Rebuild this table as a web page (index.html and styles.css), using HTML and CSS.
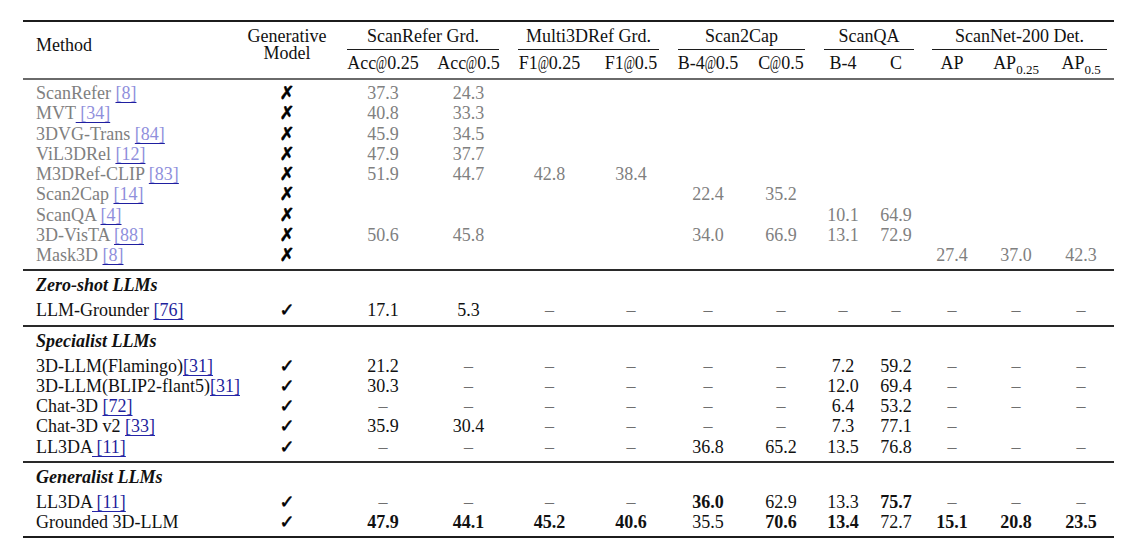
FILE: index.html
```html
<!DOCTYPE html>
<html>
<head>
<meta charset="utf-8">
<link rel="stylesheet" href="styles.css">
</head>
<body>
<div class="wrap">
<table class="results">
  <colgroup>
    <col class="c-method"><col class="c-gen"><col class="c-a1"><col class="c-a2"><col class="c-f1"><col class="c-f2">
    <col class="c-b4"><col class="c-c5"><col class="c-qb"><col class="c-qc"><col class="c-ap"><col class="c-ap25"><col class="c-ap5">
  </colgroup>
  <thead>
    <tr class="h1">
      <th rowspan="2" class="method-h">Method</th>
      <th rowspan="2" class="gen-h"><div class="gl">Generative</div><div class="gl">Model</div></th>
      <th colspan="2" class="grp"><div class="cm cm-sr">ScanRefer Grd.</div></th>
      <th colspan="2" class="grp"><div class="cm cm-mr">Multi3DRef Grd.</div></th>
      <th colspan="2" class="grp"><div class="cm cm-sc">Scan2Cap</div></th>
      <th colspan="2" class="grp"><div class="cm cm-qa">ScanQA</div></th>
      <th colspan="3" class="grp"><div class="cm cm-sn">ScanNet-200 Det.</div></th>
    </tr>
    <tr class="h2">
      <th>Acc<span class="at">@</span>0.25</th>
      <th>Acc<span class="at">@</span>0.5</th>
      <th>F1<span class="at">@</span>0.25</th>
      <th>F1<span class="at">@</span>0.5</th>
      <th>B-4<span class="at">@</span>0.5</th>
      <th>C<span class="at">@</span>0.5</th>
      <th>B-4</th>
      <th>C</th>
      <th>AP</th>
      <th>AP<sub>0.25</sub></th>
      <th>AP<sub>0.5</sub></th>
    </tr>
  </thead>
  <tbody class="grey first">
    <tr><td class="m">ScanRefer <a class="cite">[8]</a></td><td class="x">✗</td><td>37.3</td><td>24.3</td><td></td><td></td><td></td><td></td><td></td><td></td><td></td><td></td><td></td></tr>
    <tr><td class="m">MVT<a class="cite"> [34]</a></td><td class="x">✗</td><td>40.8</td><td>33.3</td><td></td><td></td><td></td><td></td><td></td><td></td><td></td><td></td><td></td></tr>
    <tr><td class="m">3DVG-Trans <a class="cite">[84]</a></td><td class="x">✗</td><td>45.9</td><td>34.5</td><td></td><td></td><td></td><td></td><td></td><td></td><td></td><td></td><td></td></tr>
    <tr><td class="m">ViL3DRel <a class="cite">[12]</a></td><td class="x">✗</td><td>47.9</td><td>37.7</td><td></td><td></td><td></td><td></td><td></td><td></td><td></td><td></td><td></td></tr>
    <tr><td class="m">M3DRef-CLIP <a class="cite">[83]</a></td><td class="x">✗</td><td>51.9</td><td>44.7</td><td>42.8</td><td>38.4</td><td></td><td></td><td></td><td></td><td></td><td></td><td></td></tr>
    <tr><td class="m">Scan2Cap <a class="cite">[14]</a></td><td class="x">✗</td><td></td><td></td><td></td><td></td><td>22.4</td><td>35.2</td><td></td><td></td><td></td><td></td><td></td></tr>
    <tr><td class="m">ScanQA <a class="cite">[4]</a></td><td class="x">✗</td><td></td><td></td><td></td><td></td><td></td><td></td><td>10.1</td><td>64.9</td><td></td><td></td><td></td></tr>
    <tr><td class="m">3D-VisTA <a class="cite">[88]</a></td><td class="x">✗</td><td>50.6</td><td>45.8</td><td></td><td></td><td>34.0</td><td>66.9</td><td>13.1</td><td>72.9</td><td></td><td></td><td></td></tr>
    <tr class="last"><td class="m">Mask3D <a class="cite">[8]</a></td><td class="x">✗</td><td></td><td></td><td></td><td></td><td></td><td></td><td></td><td></td><td>27.4</td><td>37.0</td><td>42.3</td></tr>
  </tbody>
  <tbody>
    <tr class="sec"><td colspan="13">Zero-shot LLMs</td></tr>
    <tr class="last"><td class="m">LLM-Grounder <a class="cite">[76]</a></td><td class="x">✓</td><td>17.1</td><td>5.3</td><td class="d">–</td><td class="d">–</td><td class="d">–</td><td class="d">–</td><td class="d">–</td><td class="d">–</td><td class="d">–</td><td class="d">–</td><td class="d">–</td></tr>
  </tbody>
  <tbody>
    <tr class="sec"><td colspan="13">Specialist LLMs</td></tr>
    <tr><td class="m">3D-LLM(Flamingo)<a class="cite">[31]</a></td><td class="x">✓</td><td>21.2</td><td class="d">–</td><td class="d">–</td><td class="d">–</td><td class="d">–</td><td class="d">–</td><td>7.2</td><td>59.2</td><td class="d">–</td><td class="d">–</td><td class="d">–</td></tr>
    <tr><td class="m">3D-LLM(BLIP2-flant5)<a class="cite">[31]</a></td><td class="x">✓</td><td>30.3</td><td class="d">–</td><td class="d">–</td><td class="d">–</td><td class="d">–</td><td class="d">–</td><td>12.0</td><td>69.4</td><td class="d">–</td><td class="d">–</td><td class="d">–</td></tr>
    <tr><td class="m">Chat-3D <a class="cite">[72]</a></td><td class="x">✓</td><td class="d">–</td><td class="d">–</td><td class="d">–</td><td class="d">–</td><td class="d">–</td><td class="d">–</td><td>6.4</td><td>53.2</td><td class="d">–</td><td class="d">–</td><td class="d">–</td></tr>
    <tr><td class="m">Chat-3D v2 <a class="cite">[33]</a></td><td class="x">✓</td><td>35.9</td><td>30.4</td><td class="d">–</td><td class="d">–</td><td class="d">–</td><td class="d">–</td><td>7.3</td><td>77.1</td><td class="d">–</td><td></td><td></td></tr>
    <tr class="last"><td class="m">LL3DA<a class="cite"> [11]</a></td><td class="x">✓</td><td class="d">–</td><td class="d">–</td><td class="d">–</td><td class="d">–</td><td>36.8</td><td>65.2</td><td>13.5</td><td>76.8</td><td class="d">–</td><td class="d">–</td><td class="d">–</td></tr>
  </tbody>
  <tbody class="final">
    <tr class="sec"><td colspan="13">Generalist LLMs</td></tr>
    <tr><td class="m">LL3DA<a class="cite"> [11]</a></td><td class="x">✓</td><td class="d">–</td><td class="d">–</td><td class="d">–</td><td class="d">–</td><td class="b">36.0</td><td>62.9</td><td>13.3</td><td class="b">75.7</td><td class="d">–</td><td class="d">–</td><td class="d">–</td></tr>
    <tr class="last"><td class="m">Grounded 3D-LLM</td><td class="x">✓</td><td class="b">47.9</td><td class="b">44.1</td><td class="b">45.2</td><td class="b">40.6</td><td>35.5</td><td class="b">70.6</td><td class="b">13.4</td><td>72.7</td><td class="b">15.1</td><td class="b">20.8</td><td class="b">23.5</td></tr>
  </tbody>
</table>
</div>
</body>
</html>
```

FILE: styles.css
```css
html, body {
  margin: 0;
  padding: 0;
  background: #ffffff;
}

.wrap {
  padding: 20px 0 0 23px;
}

.results {
  width: 1091px;
  table-layout: fixed;
  border-collapse: separate;
  border-spacing: 0;
  font-family: "Liberation Serif", "Times New Roman", serif;
  font-size: 18px;
  color: #111;
}

.c-method { width: 217px; }
.c-gen { width: 94px; }
.c-a1 { width: 98px; }
.c-a2 { width: 73px; }
.c-f1 { width: 89px; }
.c-f2 { width: 74px; }
.c-b4 { width: 80px; }
.c-c5 { width: 66px; }
.c-qb { width: 58px; }
.c-qc { width: 48px; }
.c-ap { width: 64px; }
.c-ap25 { width: 64px; }
.c-ap5 { width: 66px; }

.results th,
.results td {
  padding: 0;
  text-align: center;
  font-weight: normal;
  white-space: nowrap;
  line-height: 20.25px;
}

/* header */
.h1 th {
  border-top: 2px solid #1c1c1c;
  vertical-align: top;
}

.method-h {
  text-align: left !important;
  padding-left: 13px !important;
  padding-top: 13px !important;
  border-bottom: 2px solid #6a6a6a;
  line-height: 20px !important;
}

.gen-h {
  padding-top: 6px !important;
  border-bottom: 2px solid #6a6a6a;
}

.gl {
  height: 17px;
  line-height: 17px;
}

.grp {
  padding: 0;
}

.cm {
  line-height: 20px;
  padding: 4px 0 3px;
  border-bottom: 1px solid #1c1c1c;
}

.cm-sr { margin: 0 6px 0 13px; }
.cm-mr { margin: 0 9px 0 13px; }
.cm-sc { margin: 0 9px 0 10px; }
.cm-qa { margin: 0 6px 0 10px; }
.cm-sn { margin: 0 7px 0 12px; }

.h2 th {
  line-height: 20px;
  padding: 3px 0 5px;
  border-bottom: 2px solid #6a6a6a;
}

.at {
  display: inline-block;
  transform: scaleX(0.68);
  margin: 0 -0.15em;
}

.h2 sub {
  font-size: 13px;
  line-height: 0;
  vertical-align: -5px;
}

/* body */
.results td.m {
  text-align: left;
  padding-left: 13px;
}

.results td.x {
  font-family: "DejaVu Sans", sans-serif;
  font-size: 18px;
  color: #000;
  -webkit-text-stroke: 0.6px #000;
}

.first tr:first-child td {
  padding-top: 3px;
}

.results tr.last td {
  padding-bottom: 4px;
  border-bottom: 2px solid #2a2a2a;
}

.results .final tr.last td {
  border-bottom-color: #1c1c1c;
}

.grey td {
  color: #808080;
}

.grey td.x {
  color: #000;
}

.cite {
  color: #1f1f9c;
  text-decoration: underline;
  text-decoration-color: #2424a8;
  text-decoration-thickness: 1px;
  text-underline-offset: 3px;
  text-decoration-skip-ink: none;
}

.grey .cite {
  color: #8f8fdc;
  text-decoration-color: #1f1fa0;
}

.results tr.sec td {
  text-align: left;
  padding: 4px 0 5px 13px;
  line-height: 20px;
  font-weight: bold;
  font-style: italic;
}

.results td.d {
  color: #6f6f6f;
}

.results td.b {
  font-weight: bold;
}
```
